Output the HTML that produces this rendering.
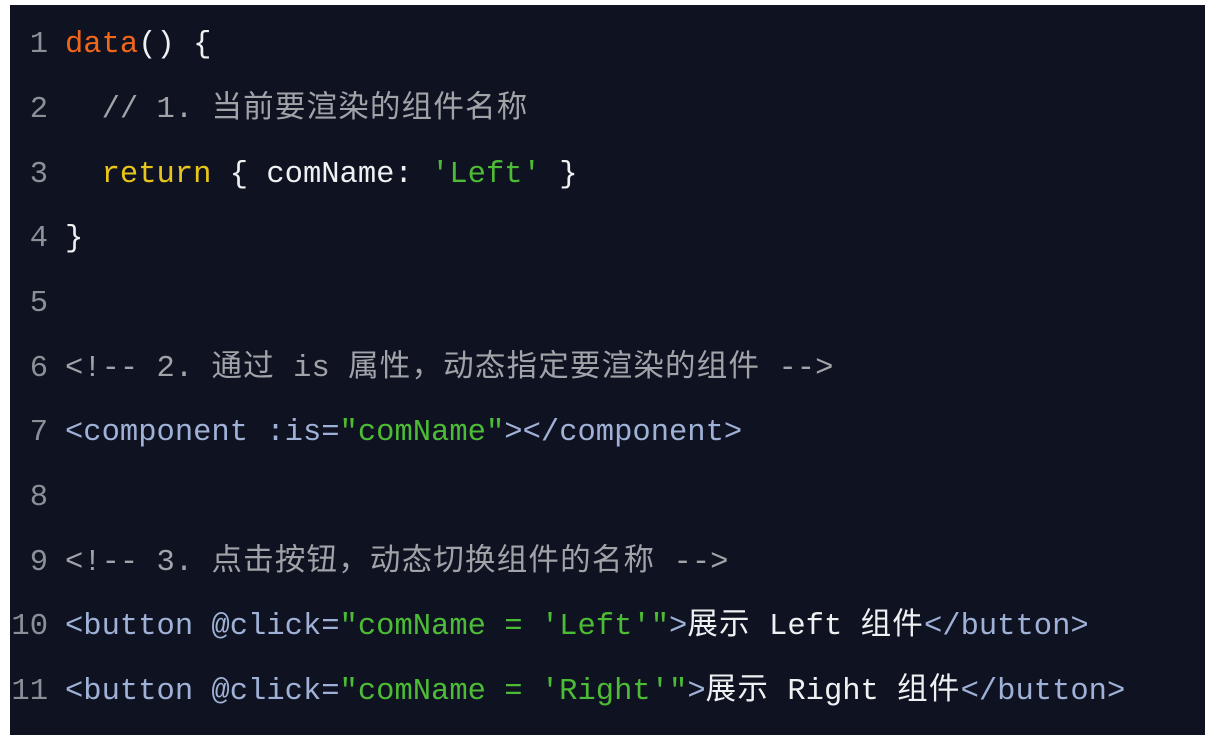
<!DOCTYPE html>
<html><head><meta charset="utf-8"><style>
html,body{margin:0;padding:0;background:#fff;width:1227px;height:741px;overflow:hidden}
.box{position:absolute;left:10px;top:5px;width:1195px;height:730px;background:#0f1220}
.l{position:absolute;left:0;height:40px;line-height:40px;white-space:pre;font-family:"Liberation Mono","Noto Sans CJK SC",monospace;font-size:30.5px;color:#eef0f2}
.n{display:inline-block;width:38px;text-align:right;color:#8b9098;margin-right:17px}
.t{color:#9fb1d6}.s{color:#4cbb35}.o{color:#f0661a}.y{color:#e8c51a}.c{color:#a0a3a8}
.k{letter-spacing:1.2px}
</style></head><body>
<div class="box">
<div class="l" style="top:20px"><span class="n">1</span><span class="o">data</span>() {</div>
<div class="l" style="top:85px"><span class="n">2</span><span class="c">  // 1. <span class="k">当前要渲染的组件名称</span></span></div>
<div class="l" style="top:150px"><span class="n">3</span>  <span class="y">return</span> { comName: <span class="s">'Left'</span> }</div>
<div class="l" style="top:214px"><span class="n">4</span>}</div>
<div class="l" style="top:279px"><span class="n">5</span></div>
<div class="l" style="top:344px"><span class="n">6</span><span class="c">&lt;!-- 2. <span class="k">通过</span> is <span class="k">属性，动态指定要渲染的组件</span> --&gt;</span></div>
<div class="l" style="top:408px"><span class="n">7</span><span class="t">&lt;component :is=</span><span class="s">"comName"</span><span class="t">&gt;&lt;/component&gt;</span></div>
<div class="l" style="top:473px"><span class="n">8</span></div>
<div class="l" style="top:538px"><span class="n">9</span><span class="c">&lt;!-- 3. <span class="k">点击按钮，动态切换组件的名称</span> --&gt;</span></div>
<div class="l" style="top:602px"><span class="n">10</span><span class="t">&lt;button @click=</span><span class="s">"comName = 'Left'"</span><span class="t">&gt;</span><span class="k">展示</span> Left <span class="k">组件</span><span class="t">&lt;/button&gt;</span></div>
<div class="l" style="top:667px"><span class="n">11</span><span class="t">&lt;button @click=</span><span class="s">"comName = 'Right'"</span><span class="t">&gt;</span><span class="k">展示</span> Right <span class="k">组件</span><span class="t">&lt;/button&gt;</span></div>
</div>
</body></html>
